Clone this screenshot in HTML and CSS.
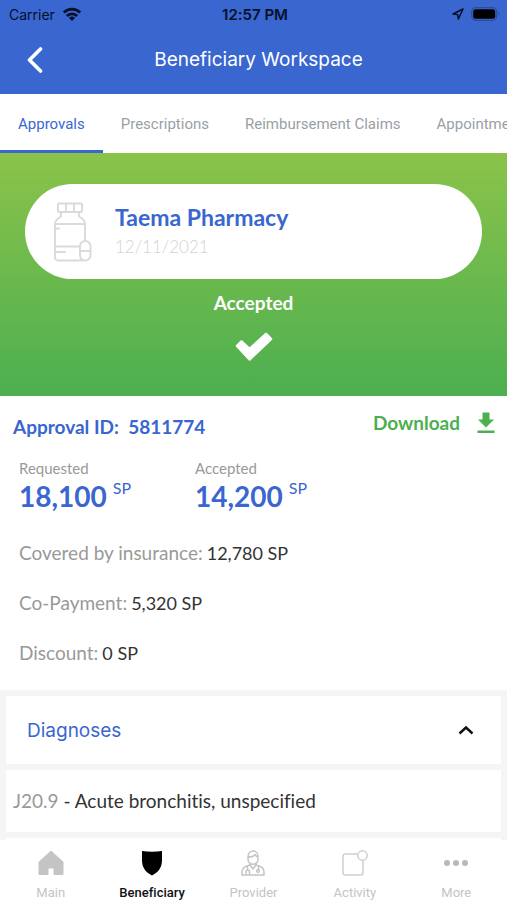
FILE: index.html
```html
<!DOCTYPE html>
<html lang="en">
<head>
<meta charset="utf-8">
<meta name="viewport" content="width=device-width, initial-scale=1">
<title>Beneficiary Workspace</title>
<link rel="stylesheet" href="styles.css">
</head>
<body>
<div class="app">
  <header class="header">
    <div class="status">
      <div class="status-left">
        <span>Carrier</span>
        <svg width="20" height="15" viewBox="0 0 20 15" aria-hidden="true"><g fill="none" stroke="currentColor" stroke-width="2.8"><path d="M1.800 5.600a11.600 11.600 0 0 1 16.400 0"/><path d="M4.800 9a7.400 7.400 0 0 1 10.400 0"/></g><path d="M10 14 7 11a4.300 4.300 0 0 1 6 0z" fill="currentColor"/></svg>
      </div>
      <span class="clock">12:57 PM</span>
      <div class="status-right">
        <svg width="12" height="12" viewBox="0 0 12 12" aria-hidden="true"><path d="M11 1 1 6l4.600.600L6.400 11z" fill="none" stroke="currentColor" stroke-width="1.500" stroke-linejoin="round"/></svg>
        <svg width="30" height="14" viewBox="0 0 30 14" aria-hidden="true"><rect x=".7" y=".7" width="25" height="12.600" rx="4" fill="none" stroke="#2c4c9a" stroke-width="1.200"/><rect x="2.200" y="2.200" width="22" height="9.600" rx="2.500" fill="#000"/><path d="M27.500 4.800q2 2.200 0 4.400z" fill="#2c4c9a"/></svg>
      </div>
    </div>
    <div class="titlebar">
      <button class="back" type="button" aria-label="Back"><svg width="16" height="26" viewBox="0 0 16 26"><path d="M13.500 2 2.500 13l11 11" fill="none" stroke="currentColor" stroke-width="3.600" stroke-linecap="round" stroke-linejoin="round"/></svg></button>
      <h1>Beneficiary Workspace</h1>
    </div>
  </header>

  <nav class="tabs" aria-label="Workspace sections">
    <a class="tab tab-active" href="#approvals">Approvals</a>
    <a class="tab" href="#prescriptions">Prescriptions</a>
    <a class="tab" href="#claims">Reimbursement Claims</a>
    <a class="tab" href="#appointments">Appointments</a>
  </nav>

  <main class="content">
    <section class="hero">
      <div class="provider">
        <svg class="bottle" width="40" height="60" viewBox="0 0 40 60" aria-hidden="true"><g fill="none" stroke="currentColor" stroke-width="1.900" stroke-linejoin="round" stroke-linecap="round"><rect x="5" y="1.500" width="24" height="8.500" rx="1"/><path d="M13 1.500V10M21 1.500V10M8 10v4.500M26 10v4.500M8 14.500c-3 1.500-6 3.500-6 7.500v33q0 3.500 3.500 3.500H30M26 14.500c3 1.500 6 3.500 6 7.500v17M2 22h30M2 26.500h4M2 44.500h25M2 50h10"/><rect x="27" y="39" width="10.500" height="19.500" rx="5.200"/><path d="M27 49h10.500"/></g></svg>
        <div>
          <h2>Taema Pharmacy</h2>
          <time datetime="2021-11-12">12/11/2021</time>
        </div>
      </div>
      <p class="state">Accepted</p>
      <svg class="check" width="38" height="30" viewBox="0 0 38 30" aria-hidden="true"><path d="M2 14 6.500 9.500 14.500 17 31 2l5 5L14.500 27.500z" fill="#fff" stroke="#fff" stroke-width="2.500" stroke-linejoin="round"/></svg>
    </section>

    <section class="details">
      <div class="idrow">
        <h3>Approval ID:&nbsp; 5811774</h3>
        <button class="download" type="button">Download
          <svg width="18" height="22" viewBox="0 0 18 22" aria-hidden="true"><path d="M5.500.5h7v7H17l-8 8-8-8h4.500zM.5 18.500h17V21H.5z" fill="currentColor"/></svg>
        </button>
      </div>
      <dl class="amounts">
        <div><dt>Requested</dt><dd>18,100 <span>SP</span></dd></div>
        <div><dt>Accepted</dt><dd>14,200 <span>SP</span></dd></div>
      </dl>
      <dl class="lines">
        <div><dt>Covered by insurance:</dt> <dd>12,780 SP</dd></div>
        <div><dt>Co-Payment:</dt> <dd>5,320 SP</dd></div>
        <div><dt>Discount:</dt> <dd>0 SP</dd></div>
      </dl>
    </section>

    <section class="panel">
      <button class="panel-head" type="button" aria-expanded="true">Diagnoses
        <svg width="16" height="10" viewBox="0 0 16 10" aria-hidden="true"><path d="m1.500 8.500 6.500-6 6.500 6" fill="none" stroke="#111" stroke-width="2.400"/></svg>
      </button>
      <p class="panel-row"><span>J20.9</span> - Acute bronchitis, unspecified</p>
      <div class="panel-next"></div>
    </section>
  </main>

  <nav class="bottom" aria-label="Main">
    <a href="#main"><svg width="28" height="28" viewBox="0 0 28 28" aria-hidden="true"><path d="M14 2 26 13v12.500h-9V19h-6v6.500H2V13z" fill="#c4c4c4" stroke="#c4c4c4" stroke-linejoin="round"/></svg>Main</a>
    <a class="current" href="#beneficiary" aria-current="page"><svg width="28" height="28" viewBox="0 0 28 28" aria-hidden="true"><path d="M4 2q10 1.500 20 0v9c0 7-3 12-10 15.500C7 23 4 18 4 11z" fill="#000"/></svg>Beneficiary</a>
    <a href="#provider"><svg width="28" height="28" viewBox="0 0 28 28" aria-hidden="true"><g fill="none" stroke="currentColor" stroke-width="1.500" stroke-linecap="round" stroke-linejoin="round"><path d="M9 8c0-8 10-8 10 0v2c0 7-10 7-10 0zM9 8c4 0 6-1 7-2.500 1 1.500 2 2.500 3 2.500M11 14v2c-5 1-8 3-8 7v3h22v-3c0-4-3-6-8-7v-2M11 16l3 4 3-4M8.500 18v3M7 24.500V23c0-2.600 3.500-2.600 3.500 0v1.500M19.500 18v2.500"/><circle cx="19" cy="22" r="1.300"/></g></svg>Provider</a>
    <a href="#activity"><svg width="28" height="28" viewBox="0 0 28 28" aria-hidden="true"><g fill="none" stroke="#d0d0d0" stroke-width="1.500"><path d="M17 5H4.500Q2 5 2 7.500v16Q2 26 4.500 26h15q2.500 0 2.500-2.500V11"/><circle cx="21.500" cy="6.500" r="4.700"/></g></svg>Activity</a>
    <a href="#more"><svg width="28" height="28" viewBox="0 0 28 28" aria-hidden="true"><g fill="#b8b8b8"><circle cx="5" cy="14" r="3"/><circle cx="14" cy="14" r="3"/><circle cx="23" cy="14" r="3"/></g></svg>More</a>
  </nav>
</div>
</body>
</html>
```
FILE: styles.css
```css
* { box-sizing: border-box; }
body, h1, h2, h3, p, dl, dd { margin: 0; }
body { background: #fff; color: #333; font-family: Lato, "Open Sans", sans-serif; font-variant-ligatures: none; }
button { padding: 0; border: 0; background: none; color: inherit; font: inherit; cursor: pointer; }
a { color: inherit; text-decoration: none; }
svg { display: block; flex: none; }

.app { display: flex; flex-direction: column; height: 100vh; overflow: hidden; }
.header { flex: none; background: #3966cf; color: #fff; font-family: Inter, sans-serif; }
.status { display: grid; grid-template-columns: 1fr auto 1fr; align-items: center; height: 28px; padding: 0 6px 0 9px; color: #06102a; font-size: 14px; }
.status-left, .status-right { display: flex; align-items: center; gap: 7px; }
.status-right { justify-content: flex-end; }
.clock { font-size: 15px; font-weight: 600; }
.titlebar { display: grid; grid-template-columns: 64px 1fr 54px; align-items: center; height: 66px; padding-bottom: 2px; }
.back { display: flex; padding-left: 27px; }
h1 { font-size: 19px; font-weight: 400; line-height: 28px; text-align: center; }

.tabs { flex: none; display: flex; overflow: hidden; height: 59px; font-family: Roboto, sans-serif; font-size: 15px; color: #999fa5; }
.tab { flex: none; padding: 0 18px; line-height: 60px; white-space: nowrap; }
.tab-active { border-bottom: 3px solid #3966cf; color: #3966cf; }

.content { flex: 1; min-height: 0; overflow: hidden; }
.hero { display: flex; flex-direction: column; align-items: center; padding: 31px 25px 34px; background: linear-gradient(#8bc34a, #4caf50); }
.provider { display: flex; align-items: center; gap: 22px; width: 100%; height: 95px; padding: 0 28px; border-radius: 48px; background: #fff; }
.bottle { color: #d8dbdd; }
h2 { color: #3966cf; font-size: 23px; font-weight: 700; line-height: 30px; }
time { display: block; color: #d3d3d3; font-size: 17px; font-weight: 300; line-height: 30px; }
.state { margin: 11px 0 16px; color: #fff; font-size: 19px; font-weight: 700; line-height: 26px; }

.details { padding: 13px 12px 0 13px; }
.idrow { display: flex; justify-content: space-between; align-items: flex-start; }
h3 { padding-top: 4px; color: #3966cf; font-size: 19px; font-weight: 700; line-height: 28px; }
.download { display: flex; align-items: center; gap: 17px; color: #4caf50; font-size: 19px; font-weight: 700; line-height: 28px; }
.amounts { display: grid; grid-template-columns: 176px 1fr; padding: 18px 6px 0; }
.amounts dt { color: #999; font-size: 15px; line-height: 18px; }
.amounts dd { display: flex; gap: 6px; color: #3966cf; font-size: 28px; font-weight: 700; line-height: 38px; }
.amounts span { font-size: 16px; font-weight: 400; line-height: 22px; }
.lines { display: grid; gap: 22px; padding: 24px 6px 23px; font-size: 19px; line-height: 28px; }
.lines div { display: flex; align-items: baseline; gap: 4px; }
.lines dt { color: #999; }
.lines dd { font-size: 18px; }

.panel { display: flex; flex-direction: column; gap: 6px; padding: 6px; background: #f5f5f5; }
.panel-head { display: flex; justify-content: space-between; align-items: center; width: 100%; height: 68px; padding: 0 27px 0 21px; background: #fff; color: #3966cf; font-family: Inter, sans-serif; font-size: 19px; }
.panel-row { padding: 17px 7px; background: #fff; font-size: 19px; line-height: 28px; }
.panel-row span { color: #999; }
.panel-next { height: 60px; background: #fff; }

.bottom { flex: none; display: grid; grid-template-columns: repeat(5, 1fr); height: 60px; padding-top: 9px; background: #fff; color: #c4c4c4; font-family: Roboto, sans-serif; font-size: 13px; }
.bottom a { display: flex; flex-direction: column; align-items: center; gap: 8px; line-height: 16px; }
.bottom .current { color: #111; font-weight: 500; }
```
